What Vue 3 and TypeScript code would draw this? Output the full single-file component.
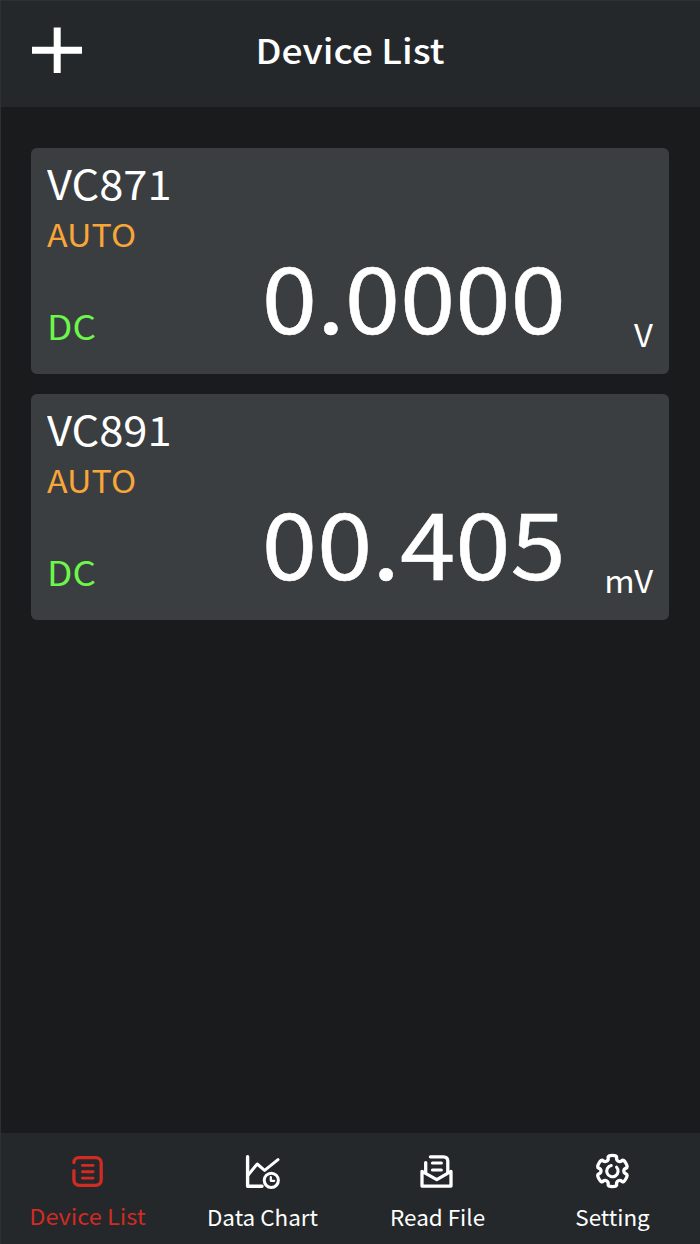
<script setup lang="ts">
interface Device {
  name: string
  mode: string
  coupling: string
  reading: string
  unit: string
}

const devices: Device[] = [
  { name: 'VC871', mode: 'AUTO', coupling: 'DC', reading: '0.0000', unit: 'V' },
  { name: 'VC891', mode: 'AUTO', coupling: 'DC', reading: '00.405', unit: 'mV' },
]

const tabs = [
  { id: 'list', label: 'Device List' },
  { id: 'chart', label: 'Data Chart' },
  { id: 'file', label: 'Read File' },
  { id: 'setting', label: 'Setting' },
]
const active = 'list'

// Six-toothed gear outline, corners rounded through segment midpoints.
function gearPath(cx: number, cy: number): string {
  const pts: [number, number][] = []
  for (let i = 0; i < 6; i++) {
    const base = -90 + i * 60
    for (const [r, a] of [[11.6, -19], [16.3, -17], [16.3, 17], [11.6, 19]]) {
      const t = ((base + a) * Math.PI) / 180
      pts.push([cx + r * Math.cos(t), cy + r * Math.sin(t)])
    }
  }
  const mid = (a: [number, number], b: [number, number]) =>
    `${((a[0] + b[0]) / 2).toFixed(2)} ${((a[1] + b[1]) / 2).toFixed(2)}`
  let d = `M${mid(pts[pts.length - 1], pts[0])}`
  pts.forEach((p, i) => {
    d += `Q${p[0].toFixed(2)} ${p[1].toFixed(2)} ${mid(p, pts[(i + 1) % pts.length])}`
  })
  return d + 'Z'
}
const gear = gearPath(20.4, 20)
</script>

<template>
  <div class="screen">
    <header class="bar">
      <button class="add" aria-label="Add device">
        <svg width="50" height="46" viewBox="0 0 50 46">
          <path d="M0 23.3H50M25.2 0.5V46" fill="none" stroke="#fff" stroke-width="7" />
        </svg>
      </button>
      <h1 class="title">Device List</h1>
    </header>

    <main class="list">
      <section v-for="d in devices" :key="d.name" class="card">
        <div class="name">{{ d.name }}</div>
        <div class="mode">{{ d.mode }}</div>
        <div class="row">
          <span class="coupling">{{ d.coupling }}</span>
          <span class="reading">{{ d.reading }}</span>
          <span class="unit">{{ d.unit }}</span>
        </div>
      </section>
    </main>

    <nav class="tabs">
      <a v-for="t in tabs" :key="t.id" class="tab" :class="{ active: t.id === active }">
        <svg class="icon" width="40" height="40" viewBox="0 0 40 40">
          <g v-if="t.id === 'list'" stroke-width="3.3">
            <path d="M5.9 11.6C5.9 8.5 8 6.7 10.9 6.7H27.7C31 6.7 33.2 8.9 33.2 12.2V28.8C33.2 32.1 31 34.3 27.7 34.3H11.4C8.1 34.3 5.9 32.1 5.9 28.8V19.6" />
            <path d="M14.4 14.4H25.1M14.4 20.7H25.1M14.4 27.1H25.1" stroke-width="2.9" />
          </g>
          <g v-else-if="t.id === 'chart'" stroke-width="3.4">
            <path d="M4.6 5.8V35.2H19" />
            <path d="M5.2 24L14.2 13L21.6 19.4L35 8.6" stroke-width="3" />
            <circle cx="28.3" cy="29.3" r="7.1" stroke-width="3" />
            <path d="M27.8 26V29.8H31.2" stroke-width="2.2" />
          </g>
          <g v-else-if="t.id === 'file'" stroke-width="3.3">
            <path d="M5 20.4V35.1H34V20.4L19.8 28.6Z" />
            <path d="M8.7 21V11.6M13.4 5.8H26.4C29.4 5.8 30.8 7.4 30.8 10.2V21" />
            <path d="M15.4 11.9H24.4M15.4 18.9H24.4" stroke-width="3" />
          </g>
          <g v-else stroke-width="3.3">
            <path :d="gear" />
            <path d="M19.2 14.5A5.7 5.7 0 1 0 24.6 16.2" stroke-width="3.1" />
          </g>
        </svg>
        <span class="label">{{ t.label }}</span>
      </a>
    </nav>
  </div>
</template>

<style>
body {
  background: #1a1b1d;
}
</style>

<style scoped>
.screen {
  box-sizing: border-box;
  display: flex;
  flex-direction: column;
  width: 700px;
  height: 1244px;
  overflow: hidden;
  background: #1a1b1d;
  color: #fff;
  font-family: 'Noto Sans CJK SC', 'Noto Sans', sans-serif;
  box-shadow: inset 1px 1px #2c3032;
}
.bar {
  box-sizing: border-box;
  display: grid;
  grid-template-columns: 125px 1fr 125px;
  align-items: start;
  height: 107px;
  background: #24282a;
  border-top: 1px solid #2d3133;
  border-left: 1px solid #2d3133;
}
.add {
  margin: 26px 0 0 30.7px;
  padding: 0;
  border: 0;
  width: 50px;
  height: 46px;
  background: none;
}
.add svg {
  display: block;
}
.title {
  margin: 19px 0 0 -1px;
  font-size: 34px;
  font-weight: 500;
  line-height: 60px;
  text-align: center;
  transform: scaleX(1.095);
}
.list {
  flex: 1;
  display: flex;
  flex-direction: column;
  gap: 20.5px;
  padding: 41.3px 31.5px 0 31.3px;
}
.card {
  box-sizing: border-box;
  height: 225.6px;
  padding: 14px 15.5px 0 16px;
  border-radius: 6px;
  background: #3b3e40;
}
.name,
.mode,
.coupling {
  transform: scaleX(1.095);
  transform-origin: left;
}
.name {
  font-size: 41px;
  line-height: 40px;
  transform: scaleX(1.06);
}
.mode {
  margin-top: 11.5px;
  font-size: 31px;
  line-height: 40px;
  color: #f8a638;
}
.row {
  display: grid;
  grid-template-columns: 1fr auto 87.5px;
  align-items: start;
}
.coupling {
  justify-self: start;
  margin-top: 52px;
  font-size: 34px;
  line-height: 40px;
  color: #6bf84b;
  transform: scaleX(1.085);
}
.reading {
  margin-top: -1px;
  font-size: 92px;
  line-height: 82px;
  transform: scaleX(1.083);
  transform-origin: right;
  -webkit-text-stroke: 0.5px;
}
.unit {
  justify-self: end;
  margin-top: 60px;
  font-size: 31px;
  line-height: 40px;
  transform: scaleX(1.06);
  transform-origin: right;
}
.tabs {
  box-sizing: border-box;
  display: grid;
  grid-template-columns: repeat(4, 1fr);
  height: 111.5px;
  background: #24282a;
  border-left: 1px solid #2d3133;
}
.tab {
  display: flex;
  flex-direction: column;
  align-items: center;
  margin-left: -1px;
  padding-top: 18.5px;
}
.tab.active {
  color: #d12b24;
}
.icon {
  display: block;
  fill: none;
  stroke: currentColor;
  stroke-linecap: round;
  stroke-linejoin: round;
}
.label {
  margin-top: 9.5px;
  font-size: 22px;
  line-height: 30px;
  white-space: nowrap;
  transform: scaleX(1.02);
}
.active .label {
  margin-top: 8.5px;
  transform: scaleX(1.07);
}
</style>
